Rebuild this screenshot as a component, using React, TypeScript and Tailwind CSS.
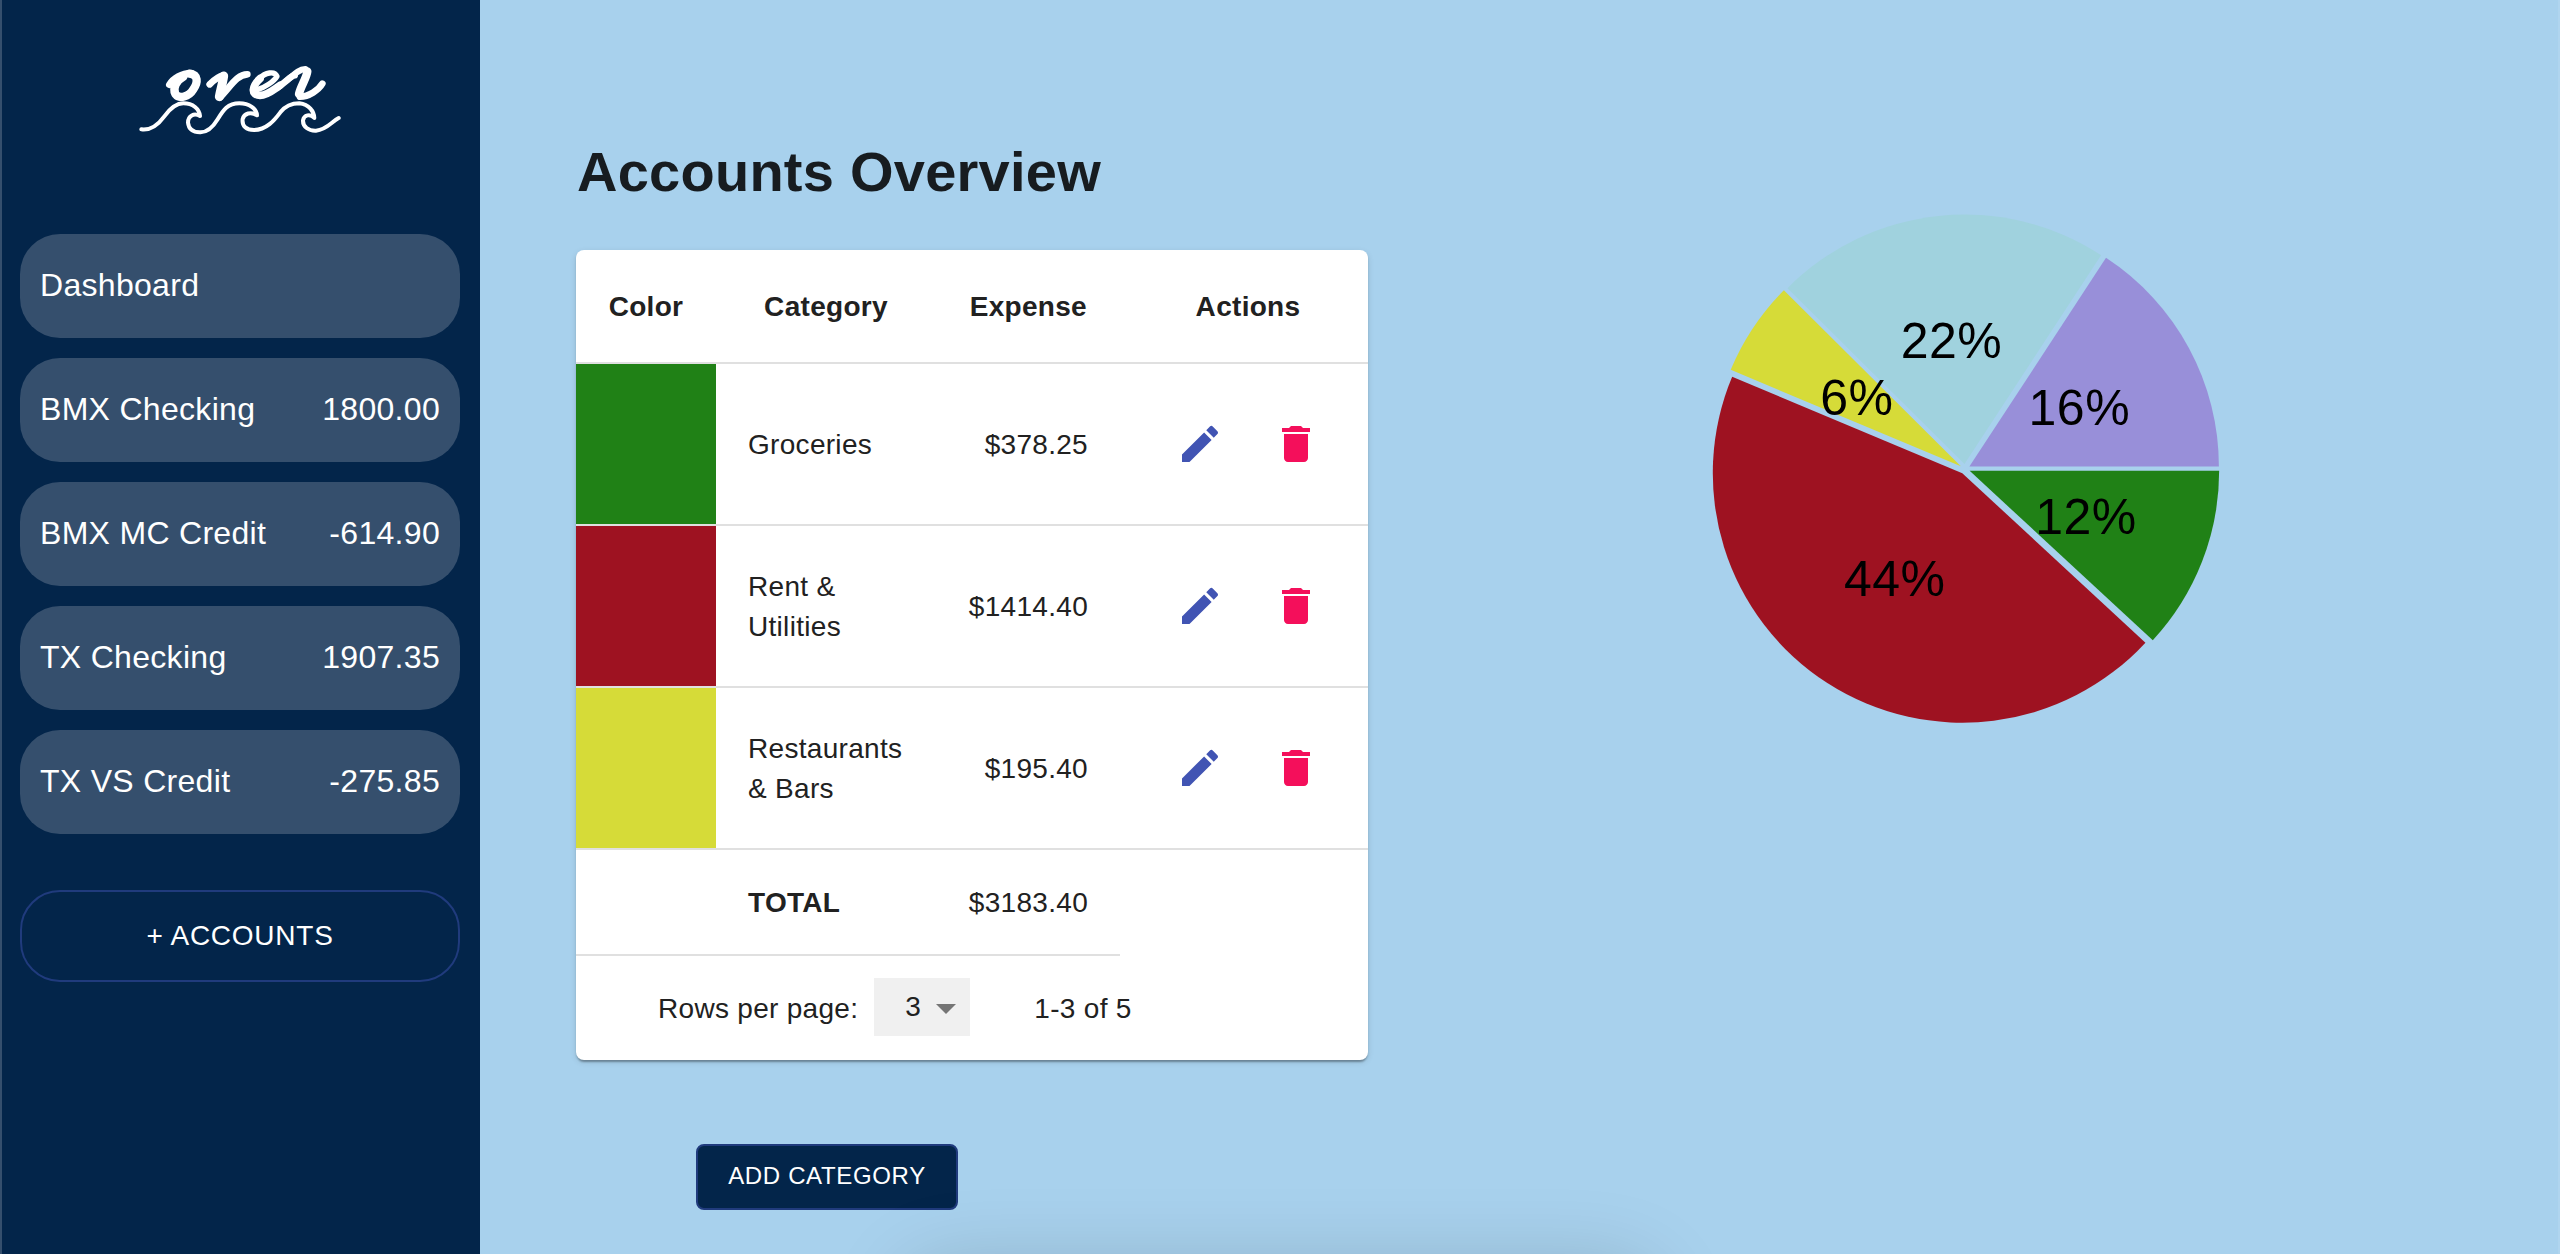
import React from "react";

const accounts = [
  { name: "Dashboard", amount: "" },
  { name: "BMX Checking", amount: "1800.00" },
  { name: "BMX MC Credit", amount: "-614.90" },
  { name: "TX Checking", amount: "1907.35" },
  { name: "TX VS Credit", amount: "-275.85" },
];

const rows = [
  { swatch: "bg-[#208116]", lines: ["Groceries"], expense: "$378.25" },
  { swatch: "bg-[#9e1221]", lines: ["Rent &", "Utilities"], expense: "$1414.40" },
  { swatch: "bg-[#d6db38]", lines: ["Restaurants", "& Bars"], expense: "$195.40" },
];

const slices = [
  { color: "#208116", from: 0, to: 42.77, label: "12%" },
  { color: "#9e1221", from: 42.77, to: 202.72, label: "44%" },
  { color: "#d6db38", from: 202.72, to: 224.82, label: "6%" },
  { color: "#a0d2de", from: 224.82, to: 303.2, label: "22%" },
  { color: "#988fd9", from: 303.2, to: 360, label: "16%" },
];

const rad = (deg: number) => (deg * Math.PI) / 180;

function Logo() {
  return (
    <svg width="240" height="100" viewBox="0 0 720 300" fill="none" stroke="#fff" strokeLinecap="round" strokeLinejoin="round">
      <g strokeWidth="20">
        <path d="M148 104 C160 84 185 70 214 69" />
        <path strokeWidth="25" d="M208 71 C236 74 234 98 220 118 C206 141 178 148 166 132 C157 114 170 90 190 80" />
        <path d="M269 103 C282 90 295 80 311 76" />
        <path strokeWidth="27" d="M311 78 C308 100 301 122 298 140" />
        <path d="M300 142 C330 112 350 73 382 73" />
        <path strokeWidth="16" d="M412 119 C434 113 462 94 471 79 C464 62 436 67 418 86" />
        <path strokeWidth="23" d="M420 86 C396 108 391 136 420 136 C442 136 462 118 480 106" />
        <path d="M474 112 C500 94 512 78 524 76" />
        <path strokeWidth="18" d="M500 92 C520 76 534 58 556 57" />
        <path strokeWidth="25" d="M562 64 C560 84 542 108 537 132" />
        <path d="M540 140 C566 140 596 120 607 101" />
      </g>
      <g strokeWidth="12">
        <path d="M64 238 C94 242 114 225 133 199 C150 176 167 160 190 160 C219 160 238 177 240 198 C222 188 204 197 204 218 C206 238 219 247 240 247 C266 248 281 228 293 208 C310 180 323 160 358 160 C388 160 410 176 411 196 C393 184 372 190 368 207 C365 229 380 240 402 240 C439 240 463 211 481 187 C496 168 514 160 538 160 C568 164 582 184 583 204 C570 190 552 195 549 211 C548 230 566 243 588 242 C620 239 636 214 656 204" />
      </g>
    </svg>
  );
}

function Sidebar() {
  return (
    <aside className="flex h-full w-[480px] shrink-0 flex-col border-l-2 border-[#354f6d] bg-[#03254a] pl-[18px] pr-5">
      <div className="-ml-5 mt-[50px] flex h-[100px] w-[480px] justify-center">
        <Logo />
      </div>
      <nav className="mt-[84px] flex flex-col gap-5">
        {accounts.map((a) => (
          <a key={a.name} className="flex h-[104px] items-center justify-between rounded-[40px] bg-[#354f6d] px-5 pb-0.5 text-[32px] leading-[48px] tracking-[0.3px] text-white">
            <span>{a.name}</span>
            <span>{a.amount}</span>
          </a>
        ))}
      </nav>
      <button className="mt-14 h-[92px] rounded-[40px] border-2 border-[#203b7d] text-[28px] tracking-[0.75px] text-white">
        + ACCOUNTS
      </button>
    </aside>
  );
}

function EditIcon() {
  return (
    <svg className="size-12" viewBox="0 0 24 24" fill="#4154b3">
      <path d="M3 17.25V21h3.75L17.81 9.94l-3.75-3.75L3 17.25zM20.71 7.04c.39-.39.39-1.02 0-1.41l-2.34-2.34a.9959.9959 0 0 0-1.41 0l-1.83 1.83 3.75 3.75 1.83-1.83z" />
    </svg>
  );
}

function DeleteIcon() {
  return (
    <svg className="size-12" viewBox="0 0 24 24" fill="#f40f5b">
      <path d="M6 19c0 1.1.9 2 2 2h8c1.1 0 2-.9 2-2V7H6v12zM19 4h-3.5l-1-1h-5l-1 1H5v2h14V4z" />
    </svg>
  );
}

function CategoryTable() {
  return (
    <section className="h-[810px] w-[792px] overflow-hidden rounded-lg bg-white text-[28px] leading-10 tracking-[0.3px] text-[#212121] shadow-[0_4px_2px_-2px_rgba(0,0,0,0.2),0_2px_2px_0_rgba(0,0,0,0.14),0_2px_6px_0_rgba(0,0,0,0.12)]">
      <div className="grid h-[114px] grid-cols-[140px_220px_184px_248px] items-center border-b-2 border-[#e0e0e0] pt-0.5 font-bold">
        <div className="text-center">Color</div>
        <div className="text-center">Category</div>
        <div className="pr-[33px] text-right">Expense</div>
        <div className="pl-2 text-center">Actions</div>
      </div>
      {rows.map((r) => (
        <div key={r.expense} className="grid h-[162px] grid-cols-[140px_220px_184px_248px] items-center border-b-2 border-[#e0e0e0]">
          <div className={"h-full " + r.swatch} />
          <div className="pl-8 pt-0.5">
            {r.lines.map((l) => (
              <div key={l}>{l}</div>
            ))}
          </div>
          <div className="pr-8 pt-0.5 text-right">{r.expense}</div>
          <div className="flex justify-center gap-12 pl-8 pr-[24px]">
            <EditIcon />
            <DeleteIcon />
          </div>
        </div>
      ))}
      <div className="grid h-[106px] w-[544px] grid-cols-[140px_220px_184px] items-center border-b-2 border-[#e0e0e0] pt-0.5">
        <div />
        <div className="pl-8 font-bold">TOTAL</div>
        <div className="pr-8 text-right">$3183.40</div>
      </div>
      <div className="flex h-[104px] items-center pl-[82px]">
        <span className="pt-0.5">Rows per page:</span>
        <div className="-mt-0.5 ml-4 flex h-[58px] w-24 items-center bg-[#f0f0f0] pl-[31px]">
          <span>3</span>
          <svg className="ml-[15px] mt-1" width="20" height="10" viewBox="0 0 20 10" fill="#757575">
            <path d="M0 0h20L10 10z" />
          </svg>
        </div>
        <span className="ml-16 pt-0.5">1-3 of 5</span>
      </div>
    </section>
  );
}

function ExpensePie() {
  const R = 249.5;
  return (
    <svg className="ml-[337px] mt-[209px] size-[520px] shrink-0" viewBox="0 0 520 520">
      {slices.map((s) => {
        const mid = rad((s.from + s.to) / 2);
        const cx = 260 + 5 * Math.cos(mid);
        const cy = 260 + 5 * Math.sin(mid);
        const d = `M${cx} ${cy}L${cx + R * Math.cos(rad(s.from))} ${cy + R * Math.sin(rad(s.from))}A${R} ${R} 0 0 1 ${cx + R * Math.cos(rad(s.to))} ${cy + R * Math.sin(rad(s.to))}Z`;
        return <path key={s.label} d={d} fill={s.color} />;
      })}
      {slices.map((s) => {
        const mid = rad((s.from + s.to) / 2);
        return (
          <text key={s.label} x={260 + 130 * Math.cos(mid)} y={260 + 130 * Math.sin(mid) + 18} textAnchor="middle" className="text-[50px] tracking-[0.5px]">
            {s.label}
          </text>
        );
      })}
    </svg>
  );
}

export default function App() {
  return (
    <div className="relative flex h-[1254px] w-[2560px] overflow-hidden border-r-2 border-[#b0d5ef] bg-[#a8d1ed] font-['Liberation_Sans',sans-serif]">
      <Sidebar />
      <main className="flex flex-1 pl-24">
        <div className="w-[792px] shrink-0">
          <h1 className="mt-[137px] h-[113px] whitespace-nowrap pl-px text-[56px] font-bold leading-[70px] tracking-[0.25px] text-[#171c20]">Accounts Overview</h1>
          <CategoryTable />
          <button className="ml-[120px] mt-[84px] h-[66px] w-[262px] rounded-lg border-2 border-[#203b7d] bg-[#03254a] pb-0.5 text-[24px] tracking-[0.65px] text-white">
            ADD CATEGORY
          </button>
        </div>
        <ExpensePie />
      </main>
      <div className="pointer-events-none absolute left-[924px] top-[1286px] h-20 w-[712px] rounded-3xl shadow-[0_0_80px_20px_rgba(0,0,0,0.17)]" />
    </div>
  );
}
